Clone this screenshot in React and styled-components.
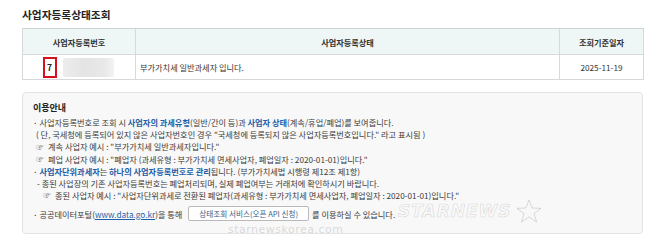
import React from 'react'
import styled, { createGlobalStyle } from 'styled-components'

const GlobalStyle = createGlobalStyle`
  html, body {
    margin: 0;
    padding: 0;
    background: #ffffff;
  }
  body {
    font-family: "Noto Sans CJK KR", "Noto Sans", sans-serif;
    color: #333;
  }
`

const Page = styled.div`
  position: relative;
  width: 658px;
  height: 243px;
  padding: 7px 14px 0 22px;
  box-sizing: border-box;
  overflow: hidden;
`

const Title = styled.h2`
  margin: 0 0 6px;
  font-size: 10.7px;
  line-height: 15px;
  font-weight: 700;
  color: #222;
`

const Table = styled.div`
  display: grid;
  grid-template-columns: 112px 1fr 84px;
  border: 1px solid #d5d9d9;
  border-top-color: #c9d4d4;
`

const HeadCell = styled.div`
  height: 25px;
  display: flex;
  align-items: center;
  justify-content: center;
  background: #eef6f6;
  border-bottom: 1px solid #d5dada;
  border-left: ${p => (p.$first ? 'none' : '1px solid #d5dada')};
  font-size: 8.2px;
  font-weight: 700;
  color: #333;
`

const Cell = styled.div`
  height: 24px;
  display: flex;
  align-items: center;
  justify-content: ${p => p.$align || 'center'};
  padding-left: ${p => (p.$align === 'flex-start' ? '4px' : '0')};
  border-left: ${p => (p.$first ? 'none' : '1px solid #d5dada')};
  font-size: 8.2px;
  color: #333;
`

const NumberWrap = styled.div`
  display: flex;
  align-items: center;
  gap: 6px;
  margin-left: -2px;
`

const Marked = styled.span`
  width: 10px;
  height: 17px;
  border: 2px solid #d4111c;
  display: flex;
  align-items: center;
  justify-content: center;
  font-size: 8.5px;
  font-weight: 700;
  color: #222;
`

const Blurred = styled.span`
  width: 51px;
  height: 19px;
  background: linear-gradient(90deg, #ededed 0%, #e4e4e4 40%, #e8e8e8 80%, #f3f3f3 100%);
  border-radius: 2px;
`

const Guide = styled.div`
  margin-top: 12px;
  width: 621px;
  background: #f8f8f8;
  border: 1px solid #e3e3e3;
  border-radius: 4px;
  padding: 7px 10px 12px 10px;
  box-sizing: border-box;
`

const GuideTitle = styled.div`
  font-size: 9px;
  font-weight: 700;
  color: #222;
  line-height: 15px;
  margin-bottom: 1px;
`

const Line = styled.div`
  font-size: 8.2px;
  line-height: 12.2px;
  color: #3a3a3a;
  padding-left: ${p => p.$indent || 0}px;
  white-space: nowrap;
  display: flex;
  align-items: center;
  margin-top: ${p => p.$gap || 0}px;
`

const Hand = styled.span`
  font-family: "Noto Sans CJK KR", "DejaVu Sans", sans-serif;
  font-size: 8px;
  line-height: 1;
  color: #808080;
  margin-right: 4px;
`

const Strong = styled.span`
  color: #1f5fa8;
  font-weight: 700;
`

const Link = styled.span`
  color: #1f5fa8;
  text-decoration: underline;
`

const ServiceButton = styled.span`
  display: inline-flex;
  align-items: center;
  height: 13px;
  padding: 0 10px;
  margin: 0 3px 0 6px;
  background: #fff;
  border: 1px solid #b9b9b9;
  border-radius: 2px;
  font-size: 7.6px;
  color: #3c5d86;
`

const Watermark = styled.div`
  position: absolute;
  left: 228px;
  top: 199px;
  pointer-events: none;
`

const WatermarkBrand = styled.div`
  display: flex;
  align-items: center;
  gap: 4px;
  margin-left: 170px;
  font-family: "DejaVu Sans", sans-serif;
  font-size: 17px;
  font-weight: 700;
  font-style: italic;
  letter-spacing: 1px;
  color: transparent;
  -webkit-text-stroke: 0.6px rgba(130, 130, 130, 0.3);
`

const WatermarkSite = styled.div`
  font-family: "DejaVu Sans", sans-serif;
  font-size: 11px;
  letter-spacing: 0.5px;
  color: rgba(130, 130, 130, 0.28);
`

const Star = () => (
  <svg width="26" height="24" viewBox="0 0 26 24" fill="none" stroke="rgba(130,130,130,0.35)" strokeWidth="0.8">
    <path d="M13 1 L16.2 9 L25 9.3 L18 14.6 L20.6 23 L13 18 L5.4 23 L8 14.6 L1 9.3 L9.8 9 Z" />
  </svg>
)

export default function App() {
  return (
    <>
      <GlobalStyle />
      <Page>
        <Title>사업자등록상태조회</Title>
        <Table>
          <HeadCell $first>사업자등록번호</HeadCell>
          <HeadCell>사업자등록상태</HeadCell>
          <HeadCell>조회기준일자</HeadCell>
          <Cell $first>
            <NumberWrap>
              <Marked>7</Marked>
              <Blurred />
            </NumberWrap>
          </Cell>
          <Cell $align="flex-start">부가가치세 일반과세자 입니다.</Cell>
          <Cell>2025-11-19</Cell>
        </Table>

        <Guide>
          <GuideTitle>이용안내</GuideTitle>
          <Line>
            ·&nbsp;사업자등록번호로 조회 시&nbsp;<Strong>사업자의 과세유형</Strong>(일반/간이 등)과&nbsp;
            <Strong>사업자 상태</Strong>(계속/휴업/폐업)를 보여줍니다.
          </Line>
          <Line $indent={3}>
            ( 단, 국세청에 등록되어 있지 않은 사업자번호인 경우 "국세청에 등록되지 않은 사업자등록번호입니다." 라고 표시됨 )
          </Line>
          <Line $indent={3}>
            <Hand>☞</Hand>계속 사업자 예시 : "부가가치세 일반과세자입니다."
          </Line>
          <Line $indent={3}>
            <Hand>☞</Hand>폐업 사업자 예시 : "폐업자 (과세유형 : 부가가치세 면세사업자, 폐업일자 : 2020-01-01)입니다."
          </Line>
          <Line>
            ·&nbsp;<Strong>사업자단위과세자</Strong>는&nbsp;<Strong>하나의 사업자등록번호로 관리</Strong>됩니다. (부가가치세법 시행령 제12조 제1항)
          </Line>
          <Line $indent={4}>
            - 종된 사업장의 기존 사업자등록번호는 폐업처리되며, 실제 폐업여부는 거래처에 확인하시기 바랍니다.
          </Line>
          <Line $indent={10}>
            <Hand>☞</Hand>종된 사업자 예시 : "사업자단위과세로 전환된 폐업자(과세유형 : 부가가치세 면세사업자, 폐업일자 : 2020-01-01)입니다."
          </Line>
          <Line $gap={5}>
            ·&nbsp;공공데이터포털(<Link>www.data.go.kr</Link>)을 통해
            <ServiceButton>상태조회 서비스(오픈 API 신청)</ServiceButton>
            를 이용하실 수 있습니다.
          </Line>
        </Guide>

        <Watermark>
          <WatermarkBrand>
            STARNEWS
            <Star />
          </WatermarkBrand>
          <WatermarkSite>starnewskorea.com</WatermarkSite>
        </Watermark>
      </Page>
    </>
  )
}
